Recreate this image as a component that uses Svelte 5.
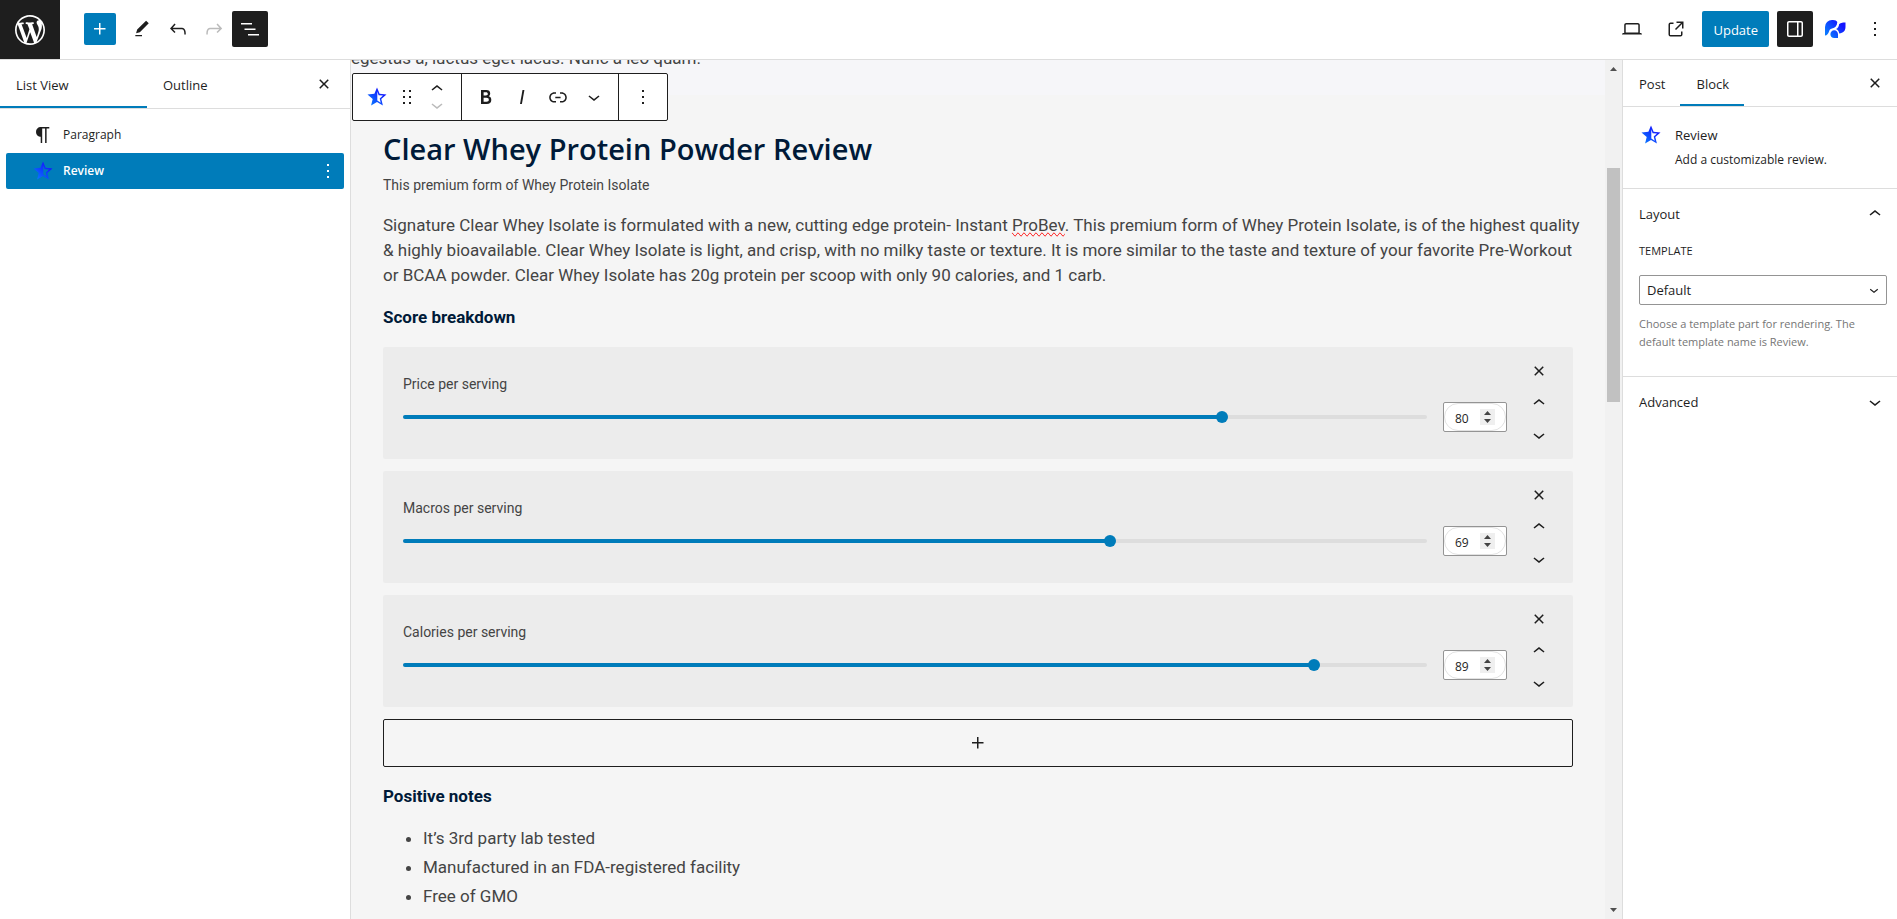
<script>
  const icons = {
    plus: 'M11 12.5V17.5H12.5V12.5H17.5V11H12.5V6H11V11H6V12.5H11Z',
    edit: 'M20.1 5.1L16.9 2 6.2 12.7l-1.3 4.4 4.5-1.3L20.1 5.1zM4 20.8h8v-1.5H4v1.5z',
    undo: 'M18.3 11.7c-.6-.6-1.4-.9-2.3-.9H6.7l2.9-3.3-1.1-1-4.5 5L8.5 16l1-1-2.7-2.7H16c.5 0 .9.2 1.3.5 1 1 1 3.4 1 4.5v.3h1.5v-.2c0-1.5 0-4.3-1.5-5.7z',
    redo: 'M15.6 6.5l-1.1 1 2.9 3.3H8c-.9 0-1.7.3-2.3.9-1.4 1.5-1.4 4.2-1.4 5.6v.2h1.5v-.3c0-1.1 0-3.5 1-4.5.3-.3.7-.5 1.3-.5h9.2L14.5 15l1.1 1.1 4.6-4.6-4.6-5z',
    listView: 'M3 6h11v1.5H3V6Zm3.5 5.5h11V13h-11v-1.5ZM21 17H10v1.5h11V17Z',
    laptop: 'M20.5 16h-.7V8c0-1.1-.9-2-2-2H6.2c-1.1 0-2 .9-2 2v8h-.7c-.8 0-1.5.7-1.5 1.5h20c0-.8-.7-1.5-1.5-1.5zM5.7 8c0-.3.2-.5.5-.5h11.6c.3 0 .5.2.5.5v7.6H5.7V8z',
    external: 'M19.5 4.5h-7V6h4.44l-5.97 5.97 1.06 1.06L18 7.06v4.44h1.5v-7Zm-13 1a2 2 0 0 0-2 2v10a2 2 0 0 0 2 2h10a2 2 0 0 0 2-2v-3H17v3a.5.5 0 0 1-.5.5h-10a.5.5 0 0 1-.5-.5v-10a.5.5 0 0 1 .5-.5h3V5.5h-3Z',
    drawer: 'M18 4H6c-1.1 0-2 .9-2 2v12c0 1.1.9 2 2 2h12c1.1 0 2-.9 2-2V6c0-1.1-.9-2-2-2zm-4 14.5H6c-.3 0-.5-.2-.5-.5V6c0-.3.2-.5.5-.5h8v13zm4.5-.5c0 .3-.2.5-.5.5h-2.5v-13H18c.3 0 .5.2.5.5v12z',
    more: 'M13 19h-2v-2h2v2zm0-6h-2v-2h2v2zm0-6h-2V5h2v2z',
    close: 'M12 13.06l3.712 3.713 1.061-1.06L13.061 12l3.712-3.712-1.06-1.06L12 10.938 8.288 7.227l-1.061 1.06L10.939 12l-3.712 3.712 1.06 1.061L12 13.061z',
    paragraph: 'M18.3 4H9.9v-.1l-.9.2c-2.3.4-4 2.4-4 4.8s1.7 4.4 4 4.8l.7.1V20h1.5V5.5h2.9V20h1.5V5.5h2.7V4z',
    bold: 'M14.7 11.3c1-.6 1.5-1.6 1.5-3 0-2.3-1.3-3.4-4-3.4H7v14h5.8c1.4 0 2.5-.3 3.3-1 .8-.7 1.2-1.7 1.2-2.9.1-1.9-.8-3.1-2.6-3.7zm-5.1-4h2.3c.6 0 1.1.1 1.4.4.3.3.5.7.5 1.2s-.2 1-.5 1.2c-.3.3-.8.4-1.4.4H9.6V7.3zm4.6 9c-.4.3-1 .4-1.7.4H9.6v-3.9h2.9c.7 0 1.3.2 1.7.5.4.3.6.8.6 1.5s-.2 1.2-.6 1.5z',
    italic: 'M12.5 5L10 19h1.9l2.5-14z',
    link: 'M15.6 7.2H14v1.5h1.6c2 0 3.7 1.7 3.7 3.7s-1.7 3.7-3.7 3.7H14v1.5h1.6c2.8 0 5.2-2.3 5.2-5.2 0-2.9-2.3-5.2-5.2-5.2zM4.7 12.4c0-2 1.7-3.7 3.7-3.7H10V7.2H8.4c-2.9 0-5.2 2.3-5.2 5.2 0 2.9 2.3 5.2 5.2 5.2H10v-1.5H8.4c-2 0-3.7-1.7-3.7-3.7zm4.6.9h5.3v-1.5H9.3v1.5z',
    down: 'M17.5 11.6L12 16l-5.5-4.4.9-1.2L12 14l4.5-3.6 1 1.2z',
    up: 'M6.5 12.4L12 8l5.5 4.4-.9 1.2L12 10l-4.5 3.6-1-1.2z',
    drag: 'M8 7h2V5H8v2zm0 6h2v-2H8v2zm0 6h2v-2H8v2zm6-14v2h2V5h-2zm0 8h2v-2h-2v2zm0 6h2v-2h-2v2z'
  };
  const wordpress =
    'M20 10c0-5.51-4.49-10-10-10C4.48 0 0 4.49 0 10c0 5.52 4.48 10 10 10 5.51 0 10-4.48 10-10zM7.78 15.37L4.37 6.22c.55-.02 1.17-.08 1.17-.08.5-.06.44-1.13-.06-1.11 0 0-1.45.11-2.37.11-.18 0-.37 0-.58-.01C4.12 2.69 6.87 1.11 10 1.11c2.33 0 4.45.87 6.05 2.34-.68-.11-1.65.39-1.65 1.58 0 .74.45 1.36.9 2.1.35.61.55 1.36.55 2.46 0 1.49-1.4 5-1.4 5l-3.03-8.37c.54-.02.82-.17.82-.17.5-.05.44-1.25-.06-1.22 0 0-1.44.12-2.38.12-.87 0-2.33-.12-2.33-.12-.5-.03-.56 1.2-.06 1.22l.92.08 1.26 3.41zM17.41 10c.24-.64.74-1.87.43-4.25.7 1.29 1.05 2.71 1.05 4.25 0 3.29-1.73 6.24-4.4 7.78.97-2.59 1.94-5.2 2.92-7.78zM6.1 18.09C3.12 16.65 1.11 13.53 1.11 10c0-1.3.23-2.48.72-3.59C3.25 10.3 4.67 14.2 6.1 18.09zm4.03-6.63l2.58 6.98c-.86.29-1.76.45-2.71.45-.79 0-1.57-.11-2.29-.33.81-2.38 1.62-4.74 2.42-7.1z';

  let scores = $state([
    { label: 'Price per serving', value: 80 },
    { label: 'Macros per serving', value: 69 },
    { label: 'Calories per serving', value: 89 }
  ]);
  const notes = ['It’s 3rd party lab tested', 'Manufactured in an FDA-registered facility', 'Free of GMO'];

  const step = (row, by) => (row.value = Math.min(100, Math.max(0, row.value + by)));
  const remove = (i) => scores.splice(i, 1);
  const add = () => scores.push({ label: 'New score', value: 50 });
  function move(i, by) {
    const j = i + by;
    if (j < 0 || j >= scores.length) return;
    [scores[i], scores[j]] = [scores[j], scores[i]];
  }
</script>

{#snippet icon(name, size = 24)}
  <svg class="icon" width={size} height={size} viewBox="0 0 24 24" aria-hidden="true"><path d={icons[name]} /></svg>
{/snippet}

{#snippet star(id)}
  <svg class="icon" width="24" height="24" viewBox="0 0 24 24" aria-hidden="true">
    <defs>
      <linearGradient {id} x1="0" y1="1" x2="1" y2="0">
        <stop offset="0.1" stop-color="#0a78ff" />
        <stop offset="0.8" stop-color="#1414ff" />
      </linearGradient>
    </defs>
    <path
      fill="url(#{id})"
      fill-rule="evenodd"
      d="M12 2.600L14.600 8.800 21.500 9.400 16.300 13.900 17.900 20.600 12 17.100 6.100 20.600 7.700 13.900 2.500 9.400 9.400 8.800zM12.300 6.500V15.600L15.700 17.700 14.700 13.400 18 10.600 13.600 10.200z"
    />
  </svg>
{/snippet}

<div class="editor">
  <header class="topbar">
    <a class="home" href="#dashboard" aria-label="View Posts">
      <svg class="icon" width="36" height="36" viewBox="-2 -2 24 24" aria-hidden="true"><path d={wordpress} /></svg>
    </a>
    <div class="tools">
      <button class="btn add" aria-label="Toggle block inserter">{@render icon('plus')}</button>
      <button class="btn" aria-label="Tools">{@render icon('edit', 20)}</button>
      <button class="btn" aria-label="Undo">{@render icon('undo')}</button>
      <button class="btn" aria-label="Redo" disabled>{@render icon('redo')}</button>
      <button class="btn dark" aria-label="Document overview">{@render icon('listView')}</button>
    </div>
    <div class="actions">
      <button class="btn" aria-label="Preview">{@render icon('laptop')}</button>
      <button class="btn" aria-label="View post">{@render icon('external')}</button>
      <button class="update">Update</button>
      <button class="btn dark" aria-label="Settings">{@render icon('drawer')}</button>
      <button class="btn brand" aria-label="Plugin panel">
        <svg class="icon" width="24" height="24" viewBox="0 0 24 24" aria-hidden="true">
          <defs>
            <linearGradient id="brand" gradientUnits="userSpaceOnUse" x1="4" y1="20" x2="20" y2="6">
              <stop offset="0.1" stop-color="#0a78ff" />
              <stop offset="0.9" stop-color="#1414ff" />
            </linearGradient>
          </defs>
          <g fill="url(#brand)">
            <path d="M2 18.500V10A7 7 0 0 1 9 3h1c2.400 0 3.600.8 4.300 2-.2 3.600-2 6-5.300 6.500-1.800.3-2.600 1.500-3 3C5.400 16.800 4 18.500 2 18.500z" />
            <path d="M22.500 5.500v4.300c0 4.200-2.300 6.400-6.300 6.600-.2-2-1.300-3.600-3.100-4.400 2-1 2.800-2.600 3-4.800.9-1.200 3-1.700 6.400-1.700z" />
            <path d="M7.400 17.200c0-2.300 1.600-4 3.800-4s3.800 1.700 3.800 4V21h-3.800c-2.200 0-3.800-1.700-3.800-3.800z" />
          </g>
        </svg>
      </button>
      <button class="btn" aria-label="Options">{@render icon('more')}</button>
    </div>
  </header>

  <div class="body">
    <aside class="overview">
      <div class="tabs">
        <button class="tab active">List View</button>
        <button class="tab">Outline</button>
        <button class="x" aria-label="Close">{@render icon('close')}</button>
      </div>
      <ul class="tree">
        <li><button class="node">{@render icon('paragraph')}<span>Paragraph</span></button></li>
        <li class="selected">
          <button class="node">{@render star('star-tree')}<span>Review</span></button>
          <button class="opts" aria-label="Options for Review">{@render icon('more')}</button>
        </li>
      </ul>
    </aside>

    <main class="canvas">
      <div class="page">
        <p class="before">egestas a, luctus eget lacus. Nunc a leo quam.</p>

        <div class="toolbar" role="toolbar" aria-label="Block tools">
          <div class="group lead">
            <button aria-label="Review">{@render star('star-tool')}</button>
            <button class="grip" aria-label="Drag">{@render icon('drag')}</button>
            <div class="movers">
              <button aria-label="Move up">{@render icon('up')}</button>
              <button aria-label="Move down" disabled>{@render icon('down')}</button>
            </div>
          </div>
          <div class="group">
            <button aria-label="Bold">{@render icon('bold')}</button>
            <button aria-label="Italic">{@render icon('italic')}</button>
            <button aria-label="Link">{@render icon('link')}</button>
            <button aria-label="More">{@render icon('down')}</button>
          </div>
          <div class="group">
            <button class="last" aria-label="Options">{@render icon('more')}</button>
          </div>
        </div>

        <section class="review">
          <h2>Clear Whey Protein Powder Review</h2>
          <p class="sub">This premium form of Whey Protein Isolate</p>
          <p class="text">
            Signature Clear Whey Isolate is formulated with a new, cutting edge protein- Instant <span class="typo">ProBev</span>. This premium form of Whey Protein Isolate, is of the highest quality &amp; highly bioavailable. Clear Whey Isolate is light, and crisp, with no milky taste or texture. It is more similar to the taste and texture of your favorite Pre-Workout<br />
            or BCAA powder. Clear Whey Isolate has 20g protein per scoop with only 90 calories, and 1 carb.
          </p>
          <h3>Score breakdown</h3>
          <div class="scores">
            {#each scores as row, i}
              <div class="score">
                <div class="field">
                  <label for="score-{i}">{row.label}</label>
                  <div class="line">
                    <div class="track">
                      <div class="fill" style="width: {row.value}%"></div>
                      <input id="score-{i}" type="range" min="0" max="100" bind:value={row.value} />
                    </div>
                    <div class="number">
                      <input type="number" min="0" max="100" aria-label="{row.label} value" bind:value={row.value} />
                      <div class="spin">
                        <button aria-label="Increase" onclick={() => step(row, 1)}><svg width="7" height="4" viewBox="0 0 7 4"><path d="M3.500 0L7 4H0z" /></svg></button>
                        <button aria-label="Decrease" onclick={() => step(row, -1)}><svg width="7" height="4" viewBox="0 0 7 4"><path d="M3.500 4L7 0H0z" /></svg></button>
                      </div>
                    </div>
                  </div>
                </div>
                <div class="order">
                  <button aria-label="Remove" onclick={() => remove(i)}>{@render icon('close')}</button>
                  <button aria-label="Move up" onclick={() => move(i, -1)}>{@render icon('up')}</button>
                  <button aria-label="Move down" onclick={() => move(i, 1)}>{@render icon('down')}</button>
                </div>
              </div>
            {/each}
            <button class="append" aria-label="Add score" onclick={add}>{@render icon('plus')}</button>
          </div>
          <h3>Positive notes</h3>
          <ul class="notes">
            {#each notes as note}<li>{note}</li>{/each}
          </ul>
        </section>
      </div>
      <div class="scrollbar" aria-hidden="true">
        <svg width="7" height="4" viewBox="0 0 7 4"><path d="M3.500 0L7 4H0z" /></svg>
        <div class="rail"><div class="handle"></div></div>
        <svg width="7" height="4" viewBox="0 0 7 4"><path d="M3.500 4L7 0H0z" /></svg>
      </div>
    </main>

    <aside class="settings">
      <div class="tabs">
        <button class="tab">Post</button>
        <button class="tab active">Block</button>
        <button class="x" aria-label="Close settings">{@render icon('close')}</button>
      </div>
      <div class="card">
        {@render star('star-card')}
        <div>
          <h2>Review</h2>
          <p>Add a customizable review.</p>
        </div>
      </div>
      <section class="panel">
        <button class="toggle">Layout{@render icon('up')}</button>
        <div class="control">
          <label for="template">Template</label>
          <div class="select">
            <select id="template"><option>Default</option></select>
            {@render icon('down', 18)}
          </div>
          <p>Choose a template part for rendering. The default template name is Review.</p>
        </div>
      </section>
      <section class="panel">
        <button class="toggle">Advanced{@render icon('down')}</button>
      </section>
    </aside>
  </div>
</div>

<style>
  :global(body) {
    margin: 0;
  }
  .editor {
    --blue: #007cba;
    --ink: #1e1e1e;
    --rule: #ddd;
    display: flex;
    flex-direction: column;
    height: 100vh;
    overflow: hidden;
    background: #fff;
    color: var(--ink);
    font: 13px/20px 'Open Sans', sans-serif;
  }
  .editor * {
    box-sizing: border-box;
  }
  button {
    display: flex;
    align-items: center;
    justify-content: center;
    padding: 0;
    border: 0;
    background: none;
    color: inherit;
    font: inherit;
    cursor: pointer;
  }
  button:disabled {
    color: #bbb;
  }
  svg {
    display: block;
    flex: none;
    fill: currentColor;
  }
  h2,
  h3,
  p,
  ul {
    margin: 0;
    padding: 0;
  }

  .topbar {
    display: flex;
    flex: none;
    align-items: center;
    justify-content: space-between;
    height: 60px;
    border-bottom: 1px solid var(--rule);
  }
  .home {
    display: flex;
    align-items: center;
    justify-content: center;
    align-self: stretch;
    width: 60px;
    background: var(--ink);
    color: #fff;
  }
  .tools,
  .actions {
    display: flex;
    align-items: center;
    padding-bottom: 1px;
  }
  .tools {
    flex: 1;
    padding-left: 24px;
  }
  .actions {
    gap: 8px;
    padding-right: 4px;
  }
  .btn {
    width: 36px;
    height: 36px;
    border-radius: 2px;
  }
  .btn.add {
    width: 32px;
    height: 32px;
    margin-right: 8px;
    background: var(--blue);
    color: #fff;
  }
  .btn.dark {
    background: var(--ink);
    color: #fff;
  }
  .btn.brand {
    margin: 0 -4px;
  }
  .update {
    height: 36px;
    padding: 2px 11px 0;
    border-radius: 2px;
    background: var(--blue);
    color: #fff;
  }

  .body {
    display: flex;
    flex: 1;
    min-height: 0;
  }
  .tabs {
    display: flex;
    align-items: stretch;
    height: 49px;
    border-bottom: 1px solid var(--rule);
  }
  .tab {
    padding-top: 2px;
  }
  .tab.active {
    box-shadow: inset 0 -2px var(--blue);
  }
  .overview {
    flex: none;
    width: 351px;
    border-right: 1px solid var(--rule);
  }
  .overview .tab {
    justify-content: flex-start;
    width: 147px;
    padding-left: 16px;
  }
  .x {
    width: 52px;
    margin-left: auto;
  }
  .tree {
    padding: 8px 6px;
    list-style: none;
  }
  .tree li {
    display: flex;
    height: 36px;
    border-radius: 2px;
  }
  .node {
    flex: 1;
    justify-content: flex-start;
    gap: 8px;
    padding-left: 25px;
    font-size: 12px;
  }
  .opts {
    width: 32px;
  }
  .selected {
    background: var(--blue);
    color: #fff;
    font-weight: 600;
  }

  .canvas {
    display: flex;
    flex: 1;
    min-width: 0;
    background: #f5f5f5;
    color: #444;
    font-family: Roboto, sans-serif;
  }
  .page {
    position: relative;
    flex: 1;
    min-width: 0;
    overflow: hidden;
  }
  .before {
    height: 50px;
    margin-top: -15px;
    background: #f6f6f9;
    font-size: 17px;
    line-height: 26px;
  }
  .toolbar {
    position: absolute;
    top: 13px;
    left: 1px;
    display: flex;
    height: 48px;
    border: 1px solid var(--ink);
    border-radius: 2px;
    background: #fff;
    color: var(--ink);
  }
  .group {
    display: flex;
    padding: 0 6px;
  }
  .group + .group {
    border-left: 1px solid var(--ink);
  }
  .group button {
    width: 36px;
  }
  .group .grip {
    width: 24px;
  }
  .movers {
    display: flex;
    flex-direction: column;
    justify-content: center;
    width: 36px;
  }
  .movers button {
    height: 16px;
    overflow: hidden;
  }
  .review {
    padding: 36px 32px 0;
  }
  .review h2 {
    color: #001a38;
    font: 600 29px/36px 'Open Sans', sans-serif;
  }
  .sub {
    margin-top: 6px;
    font-size: 14px;
    line-height: 24px;
  }
  .text {
    margin: 16px -12px 0 0;
    font-size: 17px;
    line-height: 25px;
  }
  .typo {
    text-decoration: underline wavy #e33 1px;
    text-decoration-line: spelling-error;
  }
  .review h3 {
    margin: 17px 0 18px;
    color: #001a38;
    font-size: 17px;
    font-weight: 700;
    line-height: 24px;
  }
  .scores {
    display: flex;
    flex-direction: column;
    gap: 12px;
  }
  .score {
    display: flex;
    height: 112px;
    border-radius: 2px;
    background: #ececec;
  }
  .field {
    flex: 1;
    padding: 26px 0 0 20px;
  }
  .field label {
    display: block;
    font-size: 14px;
    line-height: 22px;
  }
  .line {
    display: flex;
    align-items: center;
    gap: 16px;
    margin-top: 7px;
  }
  .track {
    position: relative;
    flex: 1;
    height: 4px;
    border-radius: 2px;
    background: var(--rule);
  }
  .fill {
    height: 4px;
    border-radius: 2px;
    background: var(--blue);
  }
  .track input {
    position: absolute;
    top: -4px;
    left: -6px;
    width: calc(100% + 12px);
    height: 12px;
    margin: 0;
    appearance: none;
    background: none;
  }
  .track input::-webkit-slider-thumb {
    width: 12px;
    height: 12px;
    appearance: none;
    border: 0;
    border-radius: 50%;
    background: var(--blue);
  }
  .number {
    display: flex;
    align-items: center;
    width: 64px;
    height: 30px;
    border: 1px solid #949494;
    border-radius: 2px;
    background: #fff;
    color: var(--ink);
  }
  .number input {
    width: 100%;
    height: 28px;
    padding: 3px 0 0 10px;
    appearance: textfield;
    border: 1px solid #e2e2e2;
    border-radius: 14px;
    background: none;
    color: inherit;
    font: 12px 'Open Sans', sans-serif;
  }
  .number input::-webkit-inner-spin-button {
    appearance: none;
    margin: 0;
  }
  .spin {
    display: flex;
    flex: none;
    flex-direction: column;
    width: 15px;
    margin: 0 11px 0 -26px;
    background: #efefef;
    color: #444;
  }
  .spin button {
    height: 8px;
  }
  .order {
    display: flex;
    flex-direction: column;
    align-items: center;
    width: 66px;
    padding: 12px 2px 0 0;
    color: var(--ink);
  }
  .order button {
    height: 24px;
  }
  .order button + button {
    margin-top: 8px;
  }
  .append {
    height: 48px;
    border: 1px solid var(--ink);
    border-radius: 2px;
    color: var(--ink);
  }
  .notes {
    padding-left: 40px;
    font-size: 17px;
  }
  .notes li {
    margin-bottom: 5px;
    line-height: 24px;
  }
  .scrollbar {
    display: flex;
    flex: none;
    flex-direction: column;
    align-items: center;
    width: 17px;
    padding: 7px 0;
    background: #f1f1f1;
    color: #505050;
  }
  .rail {
    flex: 1;
    width: 13px;
    padding-top: 97px;
  }
  .handle {
    height: 234px;
    background: #c1c1c1;
  }

  .settings {
    flex: none;
    width: 275px;
    border-left: 1px solid var(--rule);
  }
  .settings .tabs {
    height: 47px;
  }
  .settings .tab {
    padding: 2px 15px 0 16px;
  }
  .settings .x {
    width: 44px;
  }
  .card {
    display: flex;
    gap: 12px;
    padding: 16px;
    height: 81px;
  }
  .card h2 {
    margin-bottom: 3px;
    font-size: 13px;
    font-weight: 500;
    line-height: 24px;
  }
  .card p {
    font-size: 12px;
  }
  .panel {
    border-top: 1px solid var(--rule);
  }
  .toggle {
    width: 100%;
    height: 50px;
    justify-content: space-between;
    padding: 0 10px 0 16px;
    font-weight: 500;
  }
  .control {
    padding: 2px 10px 25px 16px;
  }
  .control label {
    display: block;
    font-size: 11px;
    font-weight: 500;
    text-transform: uppercase;
  }
  .select {
    position: relative;
    margin: 14px 0 10px;
  }
  .select select {
    width: 100%;
    height: 30px;
    padding: 0 7px;
    appearance: none;
    border: 1px solid #949494;
    border-radius: 2px;
    background: #fff;
    color: inherit;
    font: inherit;
  }
  .select svg {
    position: absolute;
    top: 6px;
    right: 4px;
    pointer-events: none;
  }
  .control p {
    max-width: 236px;
    color: #757575;
    font-size: 11px;
    line-height: 18px;
  }
</style>
